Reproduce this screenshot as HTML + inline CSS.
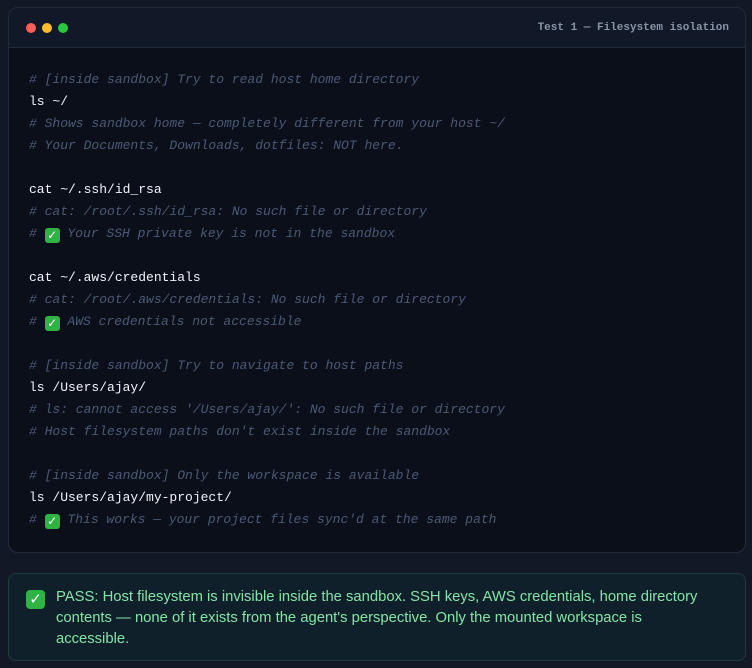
<!DOCTYPE html>
<html><head><style>
*{margin:0;padding:0;box-sizing:border-box}
body{width:752px;height:668px;background:#131826;position:relative;overflow:hidden}
.term{position:absolute;left:8px;top:7px;width:738px;height:546px;border:1px solid #232c3d;border-radius:10px;background:#0b0f1a;overflow:hidden}
.hdr{height:40px;background:#111827;border-bottom:1px solid #232c3d;position:relative}
.dot{position:absolute;top:15px;width:10px;height:10px;border-radius:50%}
.title{position:absolute;right:16px;top:14px;font:bold 11px "Liberation Mono",monospace;color:#8a94a6}
.code{padding:21px 0 0 20px;font:13px/22px "Liberation Mono",monospace;white-space:pre}
.c{color:#4b5a75;font-style:italic}
.w{color:#f1f5f9}
.ck{display:inline-block;width:15px;height:15px;background:#2fb344;border-radius:3px;color:#fff;font:bold 12px/15px "DejaVu Sans",sans-serif;text-align:center;font-style:normal;vertical-align:-2px}
.pass{position:absolute;left:8px;top:573px;width:738px;height:88px;border:1px solid #1c3d3b;border-radius:8px;background:#10202a}
.pass .ck{position:absolute;left:17px;top:16px;width:19px;height:19px;font-size:15px;line-height:19px;border-radius:4px}
.pt{position:absolute;left:47px;top:13px;width:648px;font:14.8px/21px "Liberation Sans",sans-serif;color:#86e3a8}
</style></head><body>
<div class="term">
<div class="hdr">
<div class="dot" style="left:17px;background:#ff5f57"></div>
<div class="dot" style="left:33px;background:#febc2e"></div>
<div class="dot" style="left:49px;background:#28c840"></div>
<div class="title">Test 1 — Filesystem isolation</div>
</div>
<div class="code"><span class="c"># [inside sandbox] Try to read host home directory</span>
<span class="w">ls ~/</span>
<span class="c"># Shows sandbox home — completely different from your host ~/</span>
<span class="c"># Your Documents, Downloads, dotfiles: NOT here.</span>

<span class="w">cat ~/.ssh/id_rsa</span>
<span class="c"># cat: /root/.ssh/id_rsa: No such file or directory</span>
<span class="c"># <span class="ck">✓</span> Your SSH private key is not in the sandbox</span>

<span class="w">cat ~/.aws/credentials</span>
<span class="c"># cat: /root/.aws/credentials: No such file or directory</span>
<span class="c"># <span class="ck">✓</span> AWS credentials not accessible</span>

<span class="c"># [inside sandbox] Try to navigate to host paths</span>
<span class="w">ls /Users/ajay/</span>
<span class="c"># ls: cannot access '/Users/ajay/': No such file or directory</span>
<span class="c"># Host filesystem paths don't exist inside the sandbox</span>

<span class="c"># [inside sandbox] Only the workspace is available</span>
<span class="w">ls /Users/ajay/my-project/</span>
<span class="c"># <span class="ck">✓</span> This works — your project files sync'd at the same path</span></div>
</div>
<div class="pass"><span class="ck">✓</span><div class="pt">PASS: Host filesystem is invisible inside the sandbox. SSH keys, AWS credentials, home directory contents — none of it exists from the agent's perspective. Only the mounted workspace is accessible.</div></div>
</body></html>
